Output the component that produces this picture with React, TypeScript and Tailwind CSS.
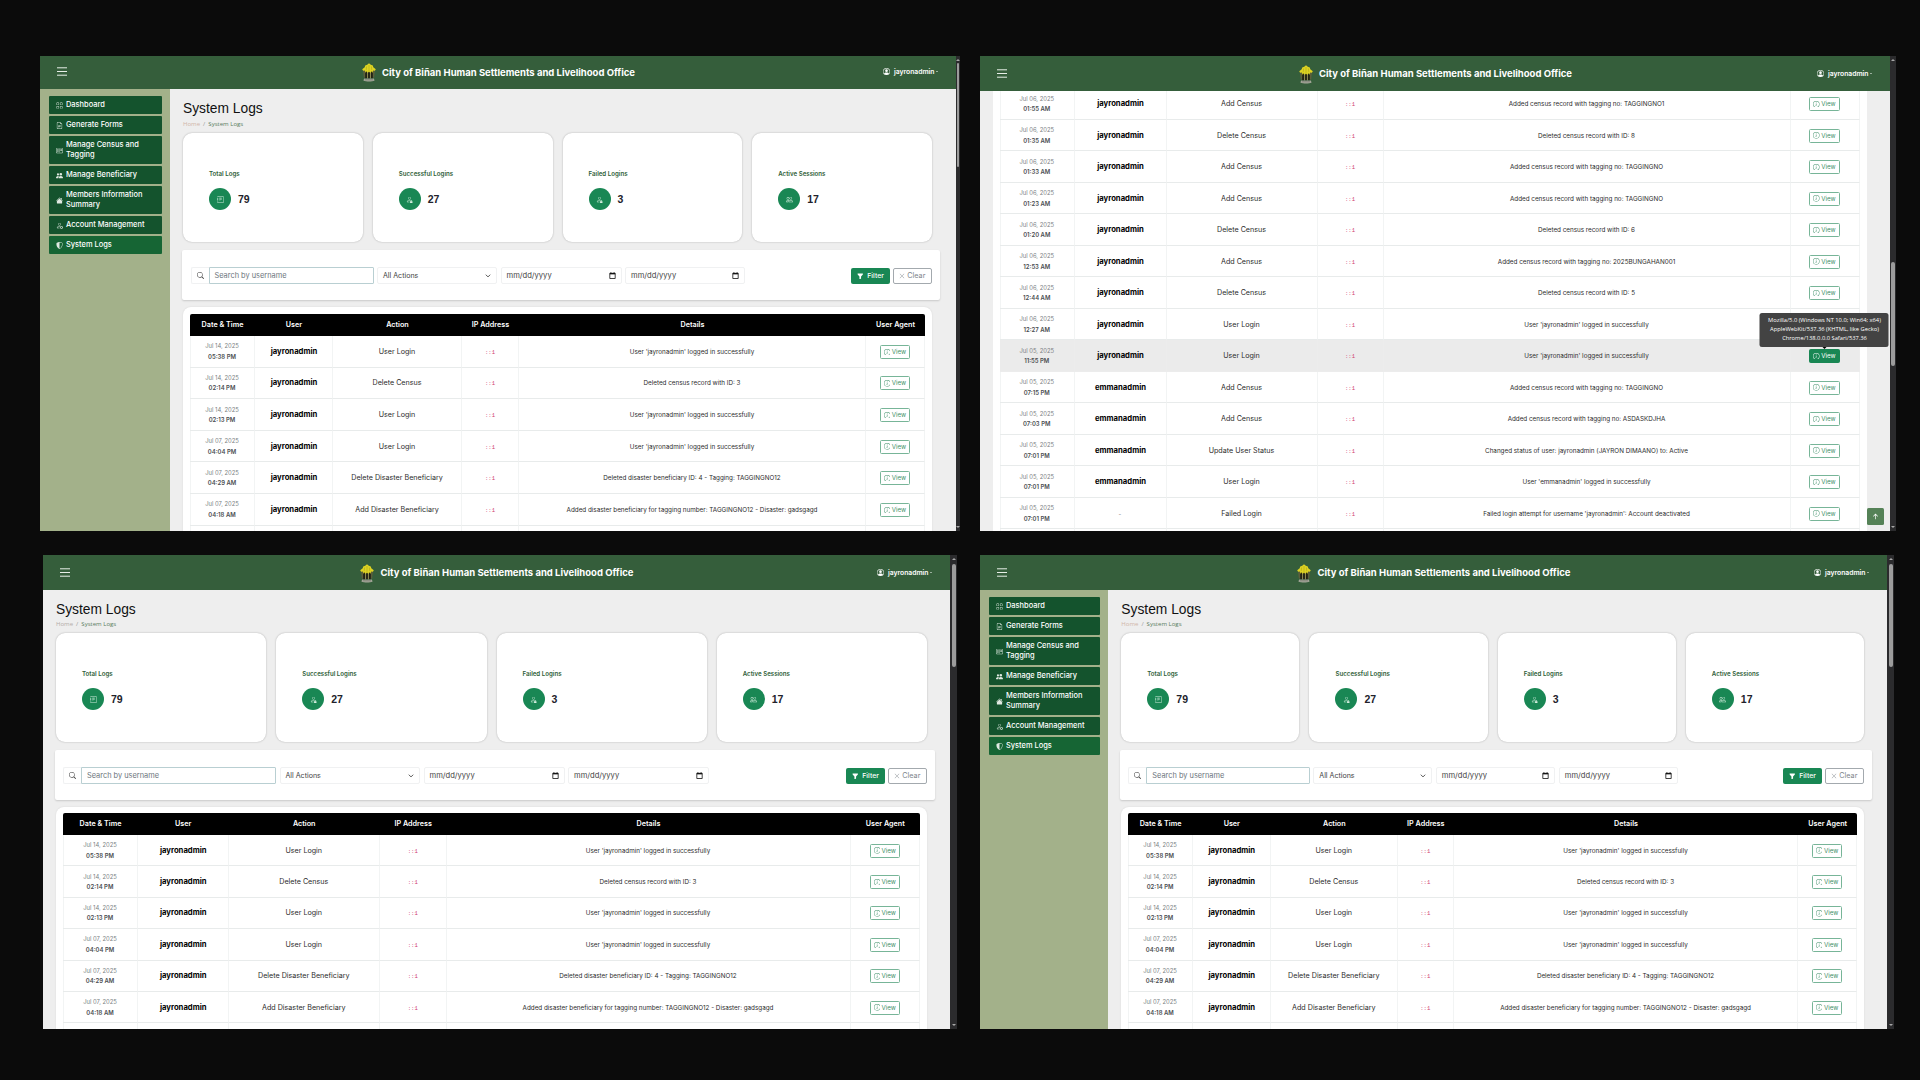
import type { ReactNode } from "react";
import {
  BsArrowUpShort,
  BsFileEarmarkText,
  BsFunnelFill,
  BsGrid,
  BsHouseFill,
  BsInfoCircle,
  BsJournalText,
  BsPeople,
  BsPeopleFill,
  BsPersonCircle,
  BsPersonGear,
  BsPersonLock,
  BsPostcard,
  BsSearch,
  BsShieldShaded,
  BsXLg,
} from "react-icons/bs";

type Log = { date: string; time: string; user: string; action: string; details: string; active?: boolean };

const loggedIn = (u: string) => `User '${u}' logged in successfully`;

const latestLogs: Log[] = [
  { date: "Jul 14, 2025", time: "05:38 PM", user: "jayronadmin", action: "User Login", details: loggedIn("jayronadmin") },
  { date: "Jul 14, 2025", time: "02:14 PM", user: "jayronadmin", action: "Delete Census", details: "Deleted census record with ID: 3" },
  { date: "Jul 14, 2025", time: "02:13 PM", user: "jayronadmin", action: "User Login", details: loggedIn("jayronadmin") },
  { date: "Jul 07, 2025", time: "04:04 PM", user: "jayronadmin", action: "User Login", details: loggedIn("jayronadmin") },
  { date: "Jul 07, 2025", time: "04:29 AM", user: "jayronadmin", action: "Delete Disaster Beneficiary", details: "Deleted disaster beneficiary ID: 4 - Tagging: TAGGINGNO12" },
  { date: "Jul 07, 2025", time: "04:18 AM", user: "jayronadmin", action: "Add Disaster Beneficiary", details: "Added disaster beneficiary for tagging number: TAGGINGNO12 - Disaster: gadsgagd" },
];

const olderLogs: Log[] = [
  { date: "Jul 06, 2025", time: "01:55 AM", user: "jayronadmin", action: "Add Census", details: "Added census record with tagging no: TAGGINGNO1" },
  { date: "Jul 06, 2025", time: "01:35 AM", user: "jayronadmin", action: "Delete Census", details: "Deleted census record with ID: 8" },
  { date: "Jul 06, 2025", time: "01:33 AM", user: "jayronadmin", action: "Add Census", details: "Added census record with tagging no: TAGGINGNO" },
  { date: "Jul 06, 2025", time: "01:23 AM", user: "jayronadmin", action: "Add Census", details: "Added census record with tagging no: TAGGINGNO" },
  { date: "Jul 06, 2025", time: "01:20 AM", user: "jayronadmin", action: "Delete Census", details: "Deleted census record with ID: 6" },
  { date: "Jul 06, 2025", time: "12:53 AM", user: "jayronadmin", action: "Add Census", details: "Added census record with tagging no: 2025BUNGAHAN001" },
  { date: "Jul 06, 2025", time: "12:44 AM", user: "jayronadmin", action: "Delete Census", details: "Deleted census record with ID: 5" },
  { date: "Jul 06, 2025", time: "12:27 AM", user: "jayronadmin", action: "User Login", details: loggedIn("jayronadmin") },
  { date: "Jul 05, 2025", time: "11:55 PM", user: "jayronadmin", action: "User Login", details: loggedIn("jayronadmin"), active: true },
  { date: "Jul 05, 2025", time: "07:15 PM", user: "emmanadmin", action: "Add Census", details: "Added census record with tagging no: TAGGINGNO" },
  { date: "Jul 05, 2025", time: "07:03 PM", user: "emmanadmin", action: "Add Census", details: "Added census record with tagging no: ASDASKDJHA" },
  { date: "Jul 05, 2025", time: "07:01 PM", user: "emmanadmin", action: "Update User Status", details: "Changed status of user: jayronadmin (JAYRON DIMAANO) to: Active" },
  { date: "Jul 05, 2025", time: "07:01 PM", user: "emmanadmin", action: "User Login", details: loggedIn("emmanadmin") },
  { date: "Jul 05, 2025", time: "07:01 PM", user: "-", action: "Failed Login", details: "Failed login attempt for username 'jayronadmin': Account deactivated" },
];

function Seal() {
  return (
    <svg viewBox="0 0 14 19" className="h-[19px] w-[14px] shrink-0">
      <path d="M2.200 15.600h9.600l.8 2c-2.800 1.300-8.400 1.300-11.200 0z" fill="#a3a698" />
      <path d="M3 16.800h8" stroke="#777a70" strokeWidth=".7" />
      <path d="M1 7h2v7.500H1.800zM11 7h2l-.8 7.500H11z" fill="#5c5f3c" />
      <path d="M3.200 7h7.600v8H3.200z" fill="#8a8850" />
      <path d="M3.200 7h1.700v8.300H3.200zM6.150 7h1.700v8.300h-1.700zM9.100 7h1.700v8.300H9.100z" fill="#17190f" />
      <path d="M7 .2l1.800 1.600 2 .6.500 1.900 2.500 1.900-.9 1.600-1.700-.3-.8 2.300-1.200-1.600L8.300 10 7 8.500 5.700 10l-.9-1.800-1.200 1.600-.8-2.300-1.700.3L.2 6.200l2.500-1.900.5-1.900 2-.6z" fill="#ddd322" />
      <path d="M7 2v6M4.600 3.500l-.4 3.700M9.400 3.500l.4 3.700" stroke="#a59d18" strokeWidth=".5" />
    </svg>
  );
}

function Header({ height }: { height: string }) {
  return (
    <header className={`relative z-20 grid shrink-0 grid-cols-[1fr_auto_1fr] items-center bg-[#355e3b] text-white ${height}`}>
      <svg viewBox="0 0 10 9" className="-mt-0.5 ml-[16.500px] h-[9px] w-[10px]" stroke="#e8efe8" strokeWidth="1">
        <path d="M0 .8h10M0 4.500h10M0 8.200h10" />
      </svg>
      <div className="ml-px flex items-center gap-[6px]">
        <Seal />
        <span className="text-[9.500px] leading-3 font-bold whitespace-nowrap">City of Biñan Human Settlements and Livelihood Office</span>
      </div>
      <div className="-mt-0.5 mr-[18px] flex items-center justify-end">
        <BsPersonCircle className="mr-[3.500px] size-[7px]" />
        <span className="text-[6.800px] leading-[9px] font-semibold">jayronadmin</span>
        <span className="ml-[1.500px] border-x-[1.500px] border-t-[1.500px] border-x-transparent border-t-white" />
      </div>
    </header>
  );
}

const navItems: { icon: typeof BsGrid; label: string; two?: boolean; active?: boolean }[] = [
  { icon: BsGrid, label: "Dashboard" },
  { icon: BsFileEarmarkText, label: "Generate Forms" },
  { icon: BsPostcard, label: "Manage Census and Tagging", two: true },
  { icon: BsPeopleFill, label: "Manage Beneficiary" },
  { icon: BsHouseFill, label: "Members Information Summary", two: true },
  { icon: BsPersonGear, label: "Account Management" },
  { icon: BsShieldShaded, label: "System Logs", active: true },
];

function Sidebar({ width }: { width: string }) {
  return (
    <aside className={`flex shrink-0 flex-col gap-[2px] bg-[#a3b18a] pt-[7px] pr-[8.500px] pl-[8.500px] ${width}`}>
      {navItems.map(({ icon: Icon, label, two, active }) => (
        <div
          key={label}
          className={`flex items-center rounded-[1px] pl-[7.500px] text-[7.450px] leading-[10px] font-medium text-white ${two ? "h-[28.200px]" : "h-[18px]"} ${active ? "bg-[#166534]" : "bg-[#14532d]"}`}
        >
          <Icon className="mr-[3px] size-[7px] shrink-0 text-[#dfe9e1]" />
          <span className="w-[84px]">{label}</span>
        </div>
      ))}
    </aside>
  );
}

const stats = [
  { label: "Total Logs", value: "79", icon: BsJournalText },
  { label: "Successful Logins", value: "27", icon: BsPersonLock },
  { label: "Failed Logins", value: "3", icon: BsPersonLock },
  { label: "Active Sessions", value: "17", icon: BsPeople },
];

function Stats() {
  return (
    <div className="mt-[4px] grid grid-cols-4 gap-[10px]">
      {stats.map(({ label, value, icon: Icon }) => (
        <div key={label} className="h-[109px] rounded-[9px] bg-white pt-[36px] pl-[26px] shadow-[0_0_2px_rgba(0,0,0,0.28)]">
          <div className="text-[6.150px] leading-[9px] font-semibold text-[#2f6038]">{label}</div>
          <div className="mt-[10px] flex items-center gap-[7px]">
            <span className="flex size-[22px] items-center justify-center rounded-full bg-[#198754] text-[#d5eee0]">
              <Icon className="size-[7px]" />
            </span>
            <span className="font-['Liberation_Sans',sans-serif] text-[10.500px] leading-3 font-bold text-[#22222b]">{value}</span>
          </div>
        </div>
      ))}
    </div>
  );
}

function DateField() {
  return (
    <div className="flex h-[17px] items-center justify-between rounded-[2px] border border-[#f0f1f2] px-[5px] text-[7.600px] leading-[10px] text-[#444]">
      <span>mm/dd/yyyy</span>
      <svg viewBox="0 0 7 7" className="size-[7px]" fill="none" stroke="#111" strokeWidth=".8">
        <path d="M.800 1.300h5.400v5.200H.800z" />
        <path d="M.800 1.700h5.400" strokeWidth="1.300" />
        <path d="M1.900.2v1M5.100.2v1" />
      </svg>
    </div>
  );
}

function Filters({ cols, margin }: { cols: string; margin: string }) {
  return (
    <div className={`mt-[8px] flex h-[50px] items-center rounded-[2px] bg-white pr-[8.500px] pl-[8.500px] shadow-[0_1px_2px_rgba(0,0,0,0.16)] ${margin}`}>
      <div className={`mt-px grid ${cols}`}>
        <div className="flex h-[17px] items-center justify-center rounded-l-[2px] border border-r-0 border-[#f0f1f2]">
          <BsSearch className="size-[7px] text-[#444]" />
        </div>
        <div className="mr-[3.500px] flex h-[17px] items-center rounded-r-[1px] border border-[#b9cfd2] pl-[5px] text-[7.400px] leading-[10px] whitespace-nowrap text-[#6c757d]">
          Search by username
        </div>
        <div className="mr-[3.500px] flex h-[17px] items-center justify-between rounded-[2px] border border-[#f0f1f2] pr-[5.500px] pl-[5px] text-[7.050px] leading-[10px] text-[#444]">
          All Actions
          <svg viewBox="0 0 6 4" className="h-[4px] w-[6px]" fill="none" stroke="#444" strokeWidth=".9">
            <path d="M.800.700L3 2.900 5.200.700" />
          </svg>
        </div>
        <div className="mr-[3.500px]">
          <DateField />
        </div>
        <DateField />
      </div>
      <div className="mt-[2px] ml-auto flex gap-[3.500px]">
        <div className="flex h-[16.500px] w-[38.300px] items-center justify-center gap-[3.500px] rounded-[2px] bg-[#198754] text-[6.850px] font-medium text-white">
          <BsFunnelFill className="size-[6.500px]" />
          Filter
        </div>
        <div className="flex h-[16.500px] w-[38.300px] items-center justify-center gap-[2px] rounded-[2px] border border-[#a3a9ae] text-[7.200px] text-[#7d848a]">
          <BsXLg className="size-[6px]" />
          Clear
        </div>
      </div>
    </div>
  );
}

function ViewButton({ active }: { active?: boolean }) {
  return (
    <div className="relative">
      <div
        className={`flex h-[14px] w-[30.300px] items-center justify-center gap-[1.500px] rounded-[1.500px] border text-[6.200px] leading-[8px] ${active ? "border-[#198754] bg-[#198754] text-white" : "border-[#77b598] text-[#3f8f69]"}`}
      >
        <BsInfoCircle className="size-[6.500px]" />
        View
      </div>
      {active && (
        <div className="absolute bottom-full left-1/2 z-10 mb-[2.500px] flex h-[33.500px] w-[129px] -translate-x-1/2 flex-col items-center justify-center rounded-[2.500px] bg-[#434343] font-['Open_Sans',sans-serif] text-[5.760px] leading-[9px] whitespace-nowrap text-white">
          <span>Mozilla/5.0 (Windows NT 10.0; Win64; x64)</span>
          <span>AppleWebKit/537.36 (KHTML, like Gecko)</span>
          <span>Chrome/138.0.0.0 Safari/537.36</span>
          <span className="absolute top-full left-1/2 -ml-[2px] border-x-2 border-t-2 border-x-transparent border-t-black" />
        </div>
      )}
    </div>
  );
}

function Cell({ children, hidden }: { children?: ReactNode; hidden?: boolean }) {
  return (
    <div className={`flex flex-col items-center justify-center border-r border-b pt-px whitespace-nowrap ${hidden ? "border-[#ececec]" : "border-r-[#f2f4f4] border-b-[#e8ebeb]"}`}>
      {children}
    </div>
  );
}

function Rows({ logs, cols, rowHeight }: { logs: Log[]; cols: string; rowHeight: string }) {
  return (
    <div className="border-l border-[#f2f4f4]">
      {logs.map((log, i) => (
        <div key={i} className={`-ml-px grid text-[#2b2b2b] ${cols} ${rowHeight} ${log.active ? "bg-[#ebebeb]" : ""}`}>
          <Cell hidden={log.active}>
            <span className="text-[5.850px] leading-[10.400px] text-[#7b7f83]">{log.date}</span>
            <span className="text-[5.950px] leading-[10.400px] font-semibold text-[#4a4d50]">{log.time}</span>
          </Cell>
          <Cell hidden={log.active}>
            {log.user === "-" ? (
              <span className="text-[6px] leading-[10px] text-[#888]">-</span>
            ) : (
              <span className="ml-px text-[7.700px] leading-[10px] font-bold text-black">{log.user}</span>
            )}
          </Cell>
          <Cell hidden={log.active}>
            <span className="text-[7.150px] leading-[10px]">{log.action}</span>
          </Cell>
          <Cell hidden={log.active}>
            <span className="pt-px font-['Liberation_Mono',monospace] text-[5.600px] leading-[9px] text-[#d0406f]">::1</span>
          </Cell>
          <Cell hidden={log.active}>
            <span className="pt-px text-[6.300px] leading-[9px]">{log.details}</span>
          </Cell>
          <Cell hidden={log.active}>
            <ViewButton active={log.active} />
          </Cell>
        </div>
      ))}
      <div className={`-ml-px grid ${cols} ${rowHeight}`}>
        <Cell />
        <Cell />
        <Cell />
        <Cell />
        <Cell />
        <Cell />
      </div>
    </div>
  );
}

const headings = ["Date & Time", "User", "Action", "IP Address", "Details", "User Agent"];

type PageProps = {
  header: string;
  content: string;
  crumbGap: string;
  crumbColor: string;
  filterCols: string;
  filterMargin: string;
  tablePad: string;
  cols: string;
  rowHeight: string;
  sidebar?: string;
};

function LogsPage(p: PageProps) {
  return (
    <div className="flex min-w-0 flex-1 flex-col overflow-hidden">
      <Header height={p.header} />
      <div className="flex min-h-0 flex-1">
        {p.sidebar && <Sidebar width={p.sidebar} />}
        <main className={`min-w-0 flex-1 overflow-hidden bg-[#eeeeee] pt-[12px] ${p.content}`}>
          <h1 className="font-['Liberation_Sans',sans-serif] text-[13.800px] leading-4 text-[#111]">System Logs</h1>
          <div className={`flex gap-[3px] font-['Open_Sans',sans-serif] text-[6.050px] leading-[9px] text-[#999] ${p.crumbGap}`}>
            <span className={p.crumbColor}>Home</span>
            <span>/</span>
            <span className="text-[#5a7d62]">System Logs</span>
          </div>
          <Stats />
          <Filters cols={p.filterCols} margin={p.filterMargin} />
          <section className={`mt-[7px] rounded-t-[8px] bg-white px-[7px] shadow-[0_0_2px_rgba(0,0,0,0.1)] ${p.tablePad}`}>
            <div className={`grid h-[22px] items-center rounded-t-[2px] bg-black text-center text-[7.200px] leading-[10px] font-semibold whitespace-nowrap text-white ${p.cols}`}>
              {headings.map((h) => (
                <span key={h}>{h}</span>
              ))}
            </div>
            <Rows logs={latestLogs} cols={p.cols} rowHeight={p.rowHeight} />
          </section>
        </main>
      </div>
    </div>
  );
}

function Scrollbar({ width, thumb }: { width: string; thumb: string }) {
  return (
    <div className={`flex shrink-0 flex-col items-center bg-[#2b2b2d] py-[3px] ${width}`}>
      <span className="border-x-2 border-b-2 border-x-transparent border-b-[#a8a8a8]" />
      <span className={`rounded-full bg-[#9c9c9c] ${thumb}`} />
      <span className="mt-auto border-x-2 border-t-2 border-x-transparent border-t-[#a8a8a8]" />
    </div>
  );
}

const olderCols = "grid-cols-[74.500px_92px_151px_66px_407px_1fr]";

export default function App() {
  return (
    <div className="h-[1080px] w-[1920px] overflow-hidden bg-[#0b0b0b] pt-[56px] font-['Inter',sans-serif]">
      <div className="flex h-[475px] gap-[20px] pl-[40px]">
        <div className="flex w-[920px]">
          <LogsPage
            header="h-[33px]"
            sidebar="w-[130px]"
            content="pl-[13px] pr-[24px]"
            crumbGap="mt-[3px]"
            crumbColor="text-[#d0b5a8]"
            filterCols="grid-cols-[18px_168.500px_123.500px_124.500px_120px]"
            filterMargin="-ml-px -mr-[8px]"
            tablePad="pt-[7px]"
            cols="grid-cols-[65px_78px_129px_57px_347px_1fr]"
            rowHeight="h-[31.600px]"
          />
          <Scrollbar width="w-[4px]" thumb="w-[2px] h-[104px] mt-[2px]" />
        </div>

        <div className="flex w-[916px]">
          <div className="relative flex min-w-0 flex-1 flex-col overflow-hidden">
            <Header height="h-[35px] pt-px" />
            <div className="min-h-0 flex-1 bg-[#eeeeee] pr-[23.500px] pl-[13px]">
              <div className="-mt-[2.600px] h-[445px] bg-white px-[7px]">
                <Rows logs={olderLogs} cols={olderCols} rowHeight="h-[31.500px]" />
              </div>
            </div>
            <div className="absolute right-[6.500px] bottom-[6px] flex size-[17px] items-center justify-center rounded-[1.500px] bg-[#558257] text-white">
              <BsArrowUpShort className="size-[11px]" />
            </div>
          </div>
          <Scrollbar width="w-[6px]" thumb="w-[4px] h-[104px] mt-[201px]" />
        </div>
      </div>

      <div className="mt-[24px] flex h-[474px] gap-[23px] pl-[43px]">
        <div className="flex w-[914px]">
          <LogsPage
            header="h-[35px] pt-px"
            content="pl-[13px] pr-[23px]"
            crumbGap="mt-[2px]"
            crumbColor="text-[#b3aca8]"
            filterCols="grid-cols-[18px_198.500px_144px_144.500px_141px]"
            filterMargin="-ml-[1.500px] -mr-[8px]"
            tablePad="pt-[6px]"
            cols="grid-cols-[75px_90.500px_151.500px_66.500px_404px_1fr]"
            rowHeight="h-[31.400px]"
          />
          <Scrollbar width="w-[7px]" thumb="w-[4px] h-[103px] mt-[4px]" />
        </div>

        <div className="flex w-[914px]">
          <LogsPage
            header="h-[35px] pt-px"
            sidebar="w-[128.300px]"
            content="pl-[13px] pr-[23px]"
            crumbGap="mt-[2px]"
            crumbColor="text-[#d0b5a8]"
            filterCols="grid-cols-[18px_167px_122.500px_123px_119.500px]"
            filterMargin="-ml-[1.500px] -mr-[8px]"
            tablePad="pt-[6px]"
            cols="grid-cols-[64.500px_78px_127px_56px_344.500px_1fr]"
            rowHeight="h-[31.400px]"
          />
          <Scrollbar width="w-[7px]" thumb="w-[4px] h-[103px] mt-[4px]" />
        </div>
      </div>
    </div>
  );
}
